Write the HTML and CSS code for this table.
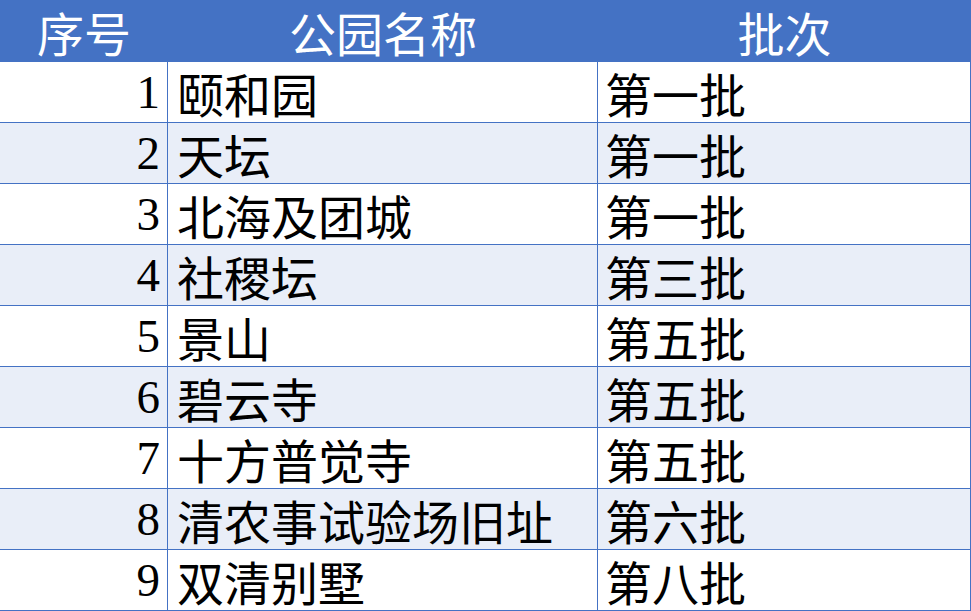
FILE: index.html
```html
<!DOCTYPE html>
<html lang="zh">
<head>
<meta charset="utf-8">
<link rel="stylesheet" href="styles.css">
</head>
<body>
<div class="table">
  <div class="hd c1">序号</div><div class="hd c2">公园名称</div><div class="hd c3">批次</div>
  <div class="cell num">1</div><div class="cell name">颐和园</div><div class="cell batch">第一批</div>
  <div class="cell num alt">2</div><div class="cell name alt">天坛</div><div class="cell batch alt">第一批</div>
  <div class="cell num">3</div><div class="cell name">北海及团城</div><div class="cell batch">第一批</div>
  <div class="cell num alt">4</div><div class="cell name alt">社稷坛</div><div class="cell batch alt">第三批</div>
  <div class="cell num">5</div><div class="cell name">景山</div><div class="cell batch">第五批</div>
  <div class="cell num alt">6</div><div class="cell name alt">碧云寺</div><div class="cell batch alt">第五批</div>
  <div class="cell num">7</div><div class="cell name">十方普觉寺</div><div class="cell batch">第五批</div>
  <div class="cell num alt">8</div><div class="cell name alt">清农事试验场旧址</div><div class="cell batch alt">第六批</div>
  <div class="cell num">9</div><div class="cell name">双清别墅</div><div class="cell batch">第八批</div>
</div>
</body>
</html>
```
FILE: styles.css
```css
html, body {
  margin: 0;
  padding: 0;
  background: #ffffff;
}
.table {
  width: 971px;
  display: grid;
  grid-template-columns: 168px 430px 373px;
  grid-template-rows: 62px repeat(9, 61px);
  font-family: "Liberation Serif", "Noto Sans CJK SC", serif;
  font-size: 47px;
  color: #000000;
}
.hd {
  background: #4472c4;
  color: #ffffff;
  display: flex;
  align-items: center;
  justify-content: center;
}
.cell {
  background: #ffffff;
  border-right: 1px solid #4472c4;
  border-bottom: 1px solid #4472c4;
  display: flex;
  align-items: center;
  white-space: nowrap;
}
.cell.alt {
  background: #e9eef8;
}
.num {
  justify-content: flex-end;
  padding-right: 7px;
}
.name {
  padding-left: 9px;
}
.batch {
  padding-left: 7px;
}
```
